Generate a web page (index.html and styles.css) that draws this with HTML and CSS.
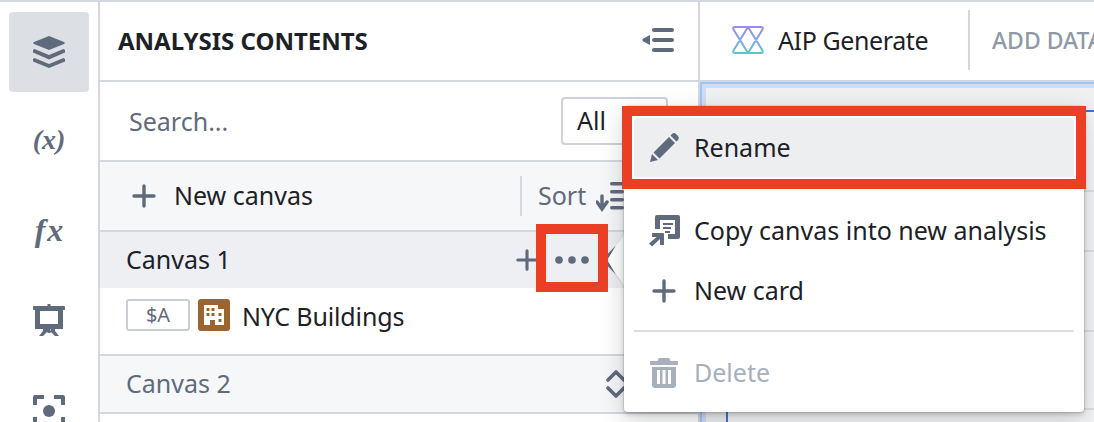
FILE: index.html
```html
<!DOCTYPE html>
<html lang="en">
<head>
<meta charset="utf-8">
<title>Analysis contents</title>
<link rel="stylesheet" href="styles.css">
</head>
<body>
<div class="app">
  <nav class="rail">
    <div class="rail-item rail-active">
      <svg class="icon32" viewBox="0 0 32 32"><path d="M16 0 31 6q1.500 1 0 2L16 14 1 8q-1.500-1 0-2Z"/><path d="M1.500 13 16 19 30.500 13 32 14v2.500L16 23.500 0 16.500V14Z"/><path d="M1.500 22 16 28 30.500 22 32 23v2.500L16 32 0 25.500V23Z"/></svg>
    </div>
    <div class="rail-item rail-h96"><span class="math">(x)</span></div>
    <div class="rail-item rail-h86"><span class="math math-lg">fx</span></div>
    <div class="rail-item rail-h92">
      <svg class="icon32" viewBox="0 0 32 32"><path d="M14.500 0h3v2h13a1.500 1.500 0 0 1 0 4H30v19H2V6H1.500a1.500 1.500 0 0 1 0-4h13ZM7 7v13h18V7Z"/><path d="M10 25h5v2l-5 5H6l4-5ZM22 25h-5v2l5 5h4l-4-5ZM14.500 25h3v4h-3Z"/></svg>
    </div>
    <div class="rail-item rail-h90">
      <svg class="icon32" viewBox="0 0 32 32"><circle cx="16" cy="16" r="6"/><path d="M2 0h9v4H4v6H0V2a2 2 0 0 1 2-2ZM21 0h9a2 2 0 0 1 2 2v8h-4V4h-7ZM0 22h4v6h7v4H2a2 2 0 0 1-2-2ZM28 22h4v8a2 2 0 0 1-2 2h-9v-4h7Z"/></svg>
    </div>
  </nav>

  <section class="panel">
    <header class="panel-head">
      <h1 class="panel-title">ANALYSIS CONTENTS</h1>
      <svg class="collapse" viewBox="0 0 32 24"><path d="M8 7v10L1 13.200q-1.400-1.200 0-2.400Z"/><rect x="10" width="22" height="4" rx="2"/><rect x="10" y="10" width="22" height="4" rx="2"/><rect x="10" y="20" width="22" height="4" rx="2"/></svg>
    </header>
    <div class="search-row">
      <span class="search-text">Search...</span>
      <div class="select">All</div>
    </div>
    <div class="tool-row">
      <svg class="plus" viewBox="0 0 24 24"><path d="M12 2v20M2 12h20"/></svg>
      <span class="new-canvas">New canvas</span>
      <div class="sort">
        <i class="divider"></i>
        <span class="sort-text">Sort</span>
        <svg class="sort-icon" viewBox="0 0 28 32"><path d="M6 16v11M1 22l5 7 5-7" class="sort-arrow"/><rect x="14" y="2" width="14" height="3.500" rx="1.700"/><rect x="14" y="10" width="14" height="3.500" rx="1.700"/><rect x="14" y="18" width="14" height="3.500" rx="1.700"/><rect x="14" y="26" width="14" height="3.500" rx="1.700"/></svg>
      </div>
    </div>
    <div class="canvas-row canvas-open">
      <span class="canvas-name">Canvas 1</span>
      <svg class="plus plus-sm" viewBox="0 0 24 24"><path d="M12 2v20M2 12h20"/></svg>
      <svg class="dots" viewBox="0 0 34 8"><circle cx="4" cy="4" r="3.800"/><circle cx="17" cy="4" r="3.800"/><circle cx="30" cy="4" r="3.800"/></svg>
      <svg class="updown" viewBox="0 0 20 28"><path d="M2 10 10 2l8 8M2 18l8 8 8-8"/></svg>
    </div>
    <div class="item-row">
      <span class="tag">$A</span>
      <svg class="building" viewBox="0 0 32 32"><rect width="32" height="32" rx="3" class="b-bg"/><path d="M6 6h14v4h6v16h-9v-5h-5v5H6Z" class="b-fg"/><path d="M8.500 9h3v3h-3zM13.500 9h3v3h-3zM8.500 14h3v3h-3zM13.500 14h3v3h-3zM20.500 14h3v3h-3zM20.500 20h3v3h-3z" class="b-bg"/></svg>
      <span class="item-name">NYC Buildings</span>
    </div>
    <div class="canvas-row canvas-closed">
      <span class="canvas-name">Canvas 2</span>
      <svg class="updown" viewBox="0 0 20 28"><path d="M2 10 10 2l8 8M2 18l8 8 8-8"/></svg>
    </div>
  </section>

  <main class="main">
    <header class="main-head">
      <svg class="aip" viewBox="0 0 32 28">
        <defs><linearGradient id="aipg" gradientUnits="userSpaceOnUse" x1="0" y1="0" x2="0" y2="28"><stop offset="0" stop-color="#9a8bf0"/><stop offset="0.55" stop-color="#7fa6e6"/><stop offset="1" stop-color="#58c9c0"/></linearGradient></defs>
        <path d="M3 1H29Q31.500 1 30.500 3.500L16 27M3 1Q.5 1 1.500 3.500L16 27M16 1 1.500 24.500Q.5 27 3 27H29Q31.500 27 30.500 24.500L16 1" stroke="url(#aipg)"/>
      </svg>
      <span class="aip-text">AIP Generate</span>
      <i class="main-divider"></i>
      <span class="add-data">ADD DATA</span>
    </header>
    <div class="stage">
      <div class="stage-inner">
        <div class="card">
          <div class="card-row card-r1"></div>
          <div class="card-row card-r2"></div>
          <div class="card-row card-r1"></div>
          <div class="card-row card-r3"></div>
        </div>
      </div>
    </div>
  </main>

  <svg class="caret" viewBox="0 0 18 60"><path d="M18 1C15 10 11 13 8 17L2 27q-1 3 0 6L8 43C11 47 15 50 18 59Z"/></svg>

  <div class="menu">
    <div class="menu-item menu-hover">
      <svg class="icon32" viewBox="0 0 32 32"><path d="M2 30 4 22 10 28ZM5.500 20.500 21 5l6 6L11.500 26.500ZM22.500 3.500l1.500-1.500a3 3 0 0 1 4 0l2 2a3 3 0 0 1 0 4L28.500 9.500Z"/></svg>
      <span>Rename</span>
    </div>
    <div class="menu-item">
      <svg class="icon32" viewBox="0 0 32 32"><path d="M9 0H30a2 2 0 0 1 2 2V22a2 2 0 0 1-2 2H20V19H27V5H12V14H7V2a2 2 0 0 1 2-2Z"/><path d="M15 8h10v2H15zM15 12h8v2H15zM17 16h5v2h-5z"/><path d="M4 18h11a1 1 0 0 1 1 1v11h-4v-6L4 31.500 1 28.500 8.500 22H4Z"/></svg>
      <span>Copy canvas into new analysis</span>
    </div>
    <div class="menu-item">
      <svg class="plus menu-plus" viewBox="0 0 24 24"><path d="M12 2v20M2 12h20"/></svg>
      <span>New card</span>
    </div>
    <hr class="menu-sep">
    <div class="menu-item menu-disabled">
      <svg class="icon32" viewBox="0 0 32 32"><path d="M12 1h8a2 2 0 0 1 2 2v1h8v4H2V4h8V3a2 2 0 0 1 2-2Z"/><path d="M4 10h24v18a3 3 0 0 1-3 3H7a3 3 0 0 1-3-3ZM9 13v14h3V13Zm5.500 0v14h3V13ZM20 13v14h3V13Z" fill-rule="evenodd"/></svg>
      <span>Delete</span>
    </div>
  </div>

  <div class="mark mark-dots"></div>
  <div class="mark mark-rename"></div>
</div>
</body>
</html>
```

FILE: styles.css
```css
* { box-sizing: border-box; }
html, body { margin: 0; height: 100%; overflow: hidden; background: #fff; }
body {
  font-family: "Noto Sans", "Open Sans", sans-serif;
  font-size: 25px;
  color: #1c2127;
}
.app {
  position: relative;
  display: flex;
  width: 1094px;
  height: 422px;
  overflow: hidden;
  border-top: 2px solid #d3d8de;
}
svg { display: block; flex: none; fill: #5f6b7c; }
.icon32 { width: 32px; height: 32px; }

.rail {
  flex: none;
  width: 100px;
  border-right: 2px solid #d3d8de;
  padding-top: 10px;
}
.rail-item { display: flex; align-items: center; justify-content: center; height: 80px; }
.rail-active { width: 80px; margin-left: 9px; background: #dce0e5; border-radius: 4px; }
.rail-h96 { height: 96px; }
.rail-h86 { height: 86px; }
.rail-h92 { height: 92px; }
.rail-h90 { height: 90px; }
.math {
  font-family: "Liberation Serif", serif;
  font-style: italic;
  font-weight: 700;
  font-size: 28px;
  color: #5f6b7c;
}
.math-lg { font-size: 32px; letter-spacing: 2px; margin: -2px 0 0 2px; }

.panel { flex: none; width: 600px; border-right: 2px solid #d3d8de; display: flex; flex-direction: column; }
.panel-head {
  height: 80px;
  flex: none;
  display: flex;
  align-items: center;
  justify-content: space-between;
  padding: 0 24px 2px 18px;
  border-bottom: 2px solid #d3d8de;
}
.panel-title { margin: 0; font-size: 24px; font-weight: 700; }
.collapse { width: 32px; height: 24px; }
.search-row {
  height: 80px;
  flex: none;
  display: flex;
  align-items: center;
  justify-content: space-between;
  padding: 0 30px 0 29px;
  border-bottom: 2px solid #d3d8de;
}
.search-text { color: #5f6b7c; }
.select {
  width: 107px;
  height: 48px;
  border: 2px solid #cfd2d6;
  border-radius: 4px;
  padding-left: 14px;
  line-height: 42px;
}
.tool-row {
  height: 70px;
  flex: none;
  display: flex;
  align-items: center;
  padding: 0 74px 0 32px;
  background: #f6f7f9;
  border-bottom: 2px solid #d3d8de;
}
.plus { width: 24px; height: 24px; fill: none; stroke: #5f6b7c; stroke-width: 3.4; stroke-linecap: round; }
.new-canvas { margin: -2px 0 0 18px; }
.sort { margin-left: auto; display: flex; align-items: center; }
.divider { display: block; width: 2px; height: 40px; background: #d3d8de; margin-right: 16px; }
.sort-text { color: #5f6b7c; width: 58px; margin-top: -2px; }
.sort-icon { width: 28px; height: 32px; }
.sort-arrow { fill: none; stroke: #5f6b7c; stroke-width: 3.4; stroke-linecap: round; }

.canvas-row {
  flex: none;
  display: flex;
  align-items: center;
  gap: 17px;
  padding: 0 72px 0 27px;
}
.canvas-name { margin: -2px auto 0 -1px; }
.canvas-open { height: 56px; background: #edeff2; }
.canvas-closed { height: 58px; background: #f6f7f9; border-bottom: 2px solid #d3d8de; color: #5f6b7c; }
.plus-sm { width: 22px; height: 22px; }
.dots { width: 34px; height: 8px; }
.updown { width: 20px; height: 28px; fill: none; stroke: #5f6b7c; stroke-width: 3.6; stroke-linecap: round; stroke-linejoin: round; }
.item-row {
  flex: none;
  height: 68px;
  display: flex;
  align-items: center;
  padding: 0 0 12px 26px;
  border-bottom: 2px solid #d3d8de;
}
.tag {
  width: 64px;
  height: 32px;
  border: 2px solid #c9ced6;
  border-radius: 3px;
  color: #5f6b7c;
  font-size: 20px;
  line-height: 27px;
  text-align: center;
  margin-right: 8px;
}
.building { width: 32px; height: 32px; margin-right: 12px; }
.b-bg { fill: #9c6431; }
.b-fg { fill: #fff; }
.item-name { margin-top: 2px; letter-spacing: -0.15px; }

.main { flex: 1; min-width: 0; display: flex; flex-direction: column; }
.main-head {
  height: 80px;
  flex: none;
  display: flex;
  align-items: center;
  padding: 0 0 2px 32px;
  border-bottom: 2px solid #d3d8de;
  white-space: nowrap;
}
.aip { width: 32px; height: 28px; margin-right: 14px; fill: none; stroke-width: 2; }
.aip-text { flex: none; letter-spacing: -0.4px; width: 190px; }
.main-divider { flex: none; display: block; width: 2px; height: 60px; background: #d3d8de; margin-right: 22px; }
.add-data { flex: none; color: #8f99a8; font-weight: 500; font-size: 23px; }
.stage { flex: 1; border: solid #a3c4f7; border-width: 2px 0 0 2px; background: #d0dcf0; padding: 4px 0 0 4px; min-height: 0; }
.stage-inner { height: 100%; background: #eef0f2; padding: 22px 0 0 20px; }
.card { height: 400px; background: #f4f5f7; border: solid #3f74c8; border-width: 2px 0 0 2px; }
.card-row { border-bottom: 2px solid #dcdfe3; }
.card-r1 { height: 80px; }
.card-r2 { height: 60px; }
.card-r3 { height: 78px; }

.caret {
  position: absolute;
  left: 607px;
  top: 228px;
  width: 18px;
  height: 60px;
  fill: #fff;
  filter: drop-shadow(0 1px 1px rgba(17, 20, 24, .12));
}
.menu {
  position: absolute;
  left: 624px;
  top: 104px;
  width: 460px;
  height: 306px;
  background: #fff;
  border-radius: 4px;
  padding: 12px 10px 0;
  box-shadow: 0 0 0 1px rgba(17, 20, 24, .08), 0 2px 4px rgba(17, 20, 24, .2), 0 8px 24px rgba(17, 20, 24, .2);
}
.menu-item {
  display: flex;
  align-items: center;
  gap: 14px;
  height: 60px;
  padding-left: 14px;
  border-radius: 4px;
  white-space: nowrap;
}
.menu-item span { margin-top: -2px; }
.menu-hover { background: #edeef0; margin-bottom: 23px; }
.menu-plus { width: 24px; height: 24px; margin: 0 4px; }
.menu-sep { border: 0; height: 2px; background: #dcdee1; margin: 9px 0 11px; }
.menu-disabled { color: #a7b0bc; }
.menu-disabled svg { fill: #a7b0bc; }

.mark { position: absolute; border: 10px solid #ea3f24; }
.mark-dots { left: 536px; top: 222px; width: 72px; height: 68px; }
.mark-rename { left: 622px; top: 104px; width: 464px; height: 83px; box-shadow: inset 0 0 0 2px #fff; }
```
